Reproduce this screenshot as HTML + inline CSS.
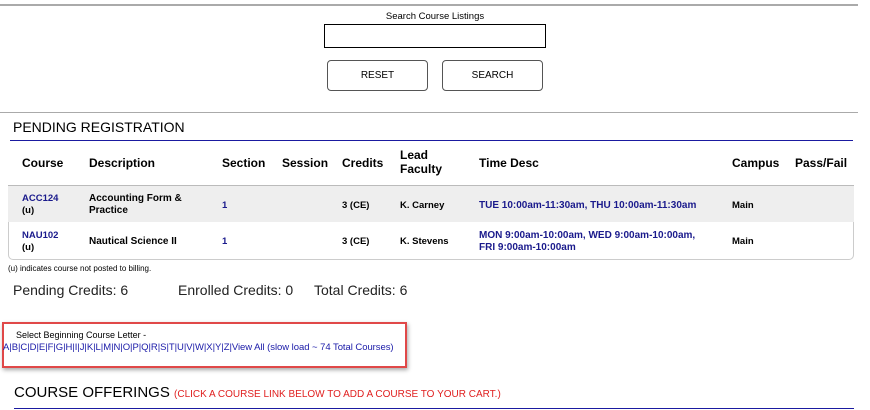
<!DOCTYPE html>
<html><head><style>
body{margin:0;width:870px;height:410px;overflow:hidden;background:#fff;font-family:"Liberation Sans",Arial,sans-serif;position:relative;color:#000}
.a{position:absolute;white-space:nowrap}
.btn{position:absolute;top:60px;width:99px;height:29px;border:1px solid #555;border-radius:4px;font-size:10px;text-align:center;line-height:30px}
.h{font-size:12px;font-weight:bold;top:156px}
.c{font-size:9.5px;font-weight:bold}
.b{color:#1a1a8c}
</style></head><body>
<div class="a" style="left:0;top:4px;width:858px;height:2px;background:#aaa"></div>
<div class="a" style="left:0;width:870px;top:11px;text-align:center;font-size:9.5px">Search Course Listings</div>
<div class="a" style="left:324px;top:24px;width:220px;height:22px;border:1px solid #000"></div>
<div class="btn" style="left:327px">RESET</div>
<div class="btn" style="left:442px">SEARCH</div>
<div class="a" style="left:0;top:112px;width:858px;height:1px;background:#aaa"></div>
<div class="a" style="left:13px;top:119px;font-size:14px">PENDING REGISTRATION</div>
<div class="a" style="left:10px;top:140px;width:843px;height:1px;background:#1a1aa0"></div>
<div class="a h" style="left:22px">Course</div>
<div class="a h" style="left:89px">Description</div>
<div class="a h" style="left:222px">Section</div>
<div class="a h" style="left:282px">Session</div>
<div class="a h" style="left:342px">Credits</div>
<div class="a h" style="left:400px;top:148px;line-height:14px">Lead<br>Faculty</div>
<div class="a h" style="left:479px">Time Desc</div>
<div class="a h" style="left:732px">Campus</div>
<div class="a h" style="left:795px">Pass/Fail</div>
<div class="a" style="left:8px;top:185px;width:846px;height:1px;background:#bbb"></div>
<div class="a" style="left:8px;top:186px;width:846px;height:36px;background:#eee"></div>
<div class="a" style="left:8px;top:222px;width:844px;height:37px;border:1px solid #ccc;border-top:none;border-radius:0 0 5px 5px"></div>
<div class="a c b" style="left:22px;top:193px;line-height:12px">ACC124<br><span style="color:#000">(u)</span></div>
<div class="a c" style="left:89px;top:193px;line-height:12px;font-size:10px">Accounting Form &amp;<br>Practice</div>
<div class="a c b" style="left:222px;top:200px">1</div>
<div class="a c" style="left:342px;top:200px">3 (CE)</div>
<div class="a c" style="left:400px;top:200px">K. Carney</div>
<div class="a c b" style="left:479px;top:200px;font-size:10px">TUE 10:00am-11:30am, THU 10:00am-11:30am</div>
<div class="a c" style="left:732px;top:200px">Main</div>
<div class="a c b" style="left:22px;top:230px;line-height:12px">NAU102<br><span style="color:#000">(u)</span></div>
<div class="a c" style="left:89px;top:236px;font-size:10px">Nautical Science II</div>
<div class="a c b" style="left:222px;top:236px">1</div>
<div class="a c" style="left:342px;top:236px">3 (CE)</div>
<div class="a c" style="left:400px;top:236px">K. Stevens</div>
<div class="a c b" style="left:479px;top:230px;line-height:12px;font-size:10px">MON 9:00am-10:00am, WED 9:00am-10:00am,<br>FRI 9:00am-10:00am</div>
<div class="a c" style="left:732px;top:236px">Main</div>
<div class="a" style="left:8px;top:264px;font-size:8px">(u) indicates course not posted to billing.</div>
<div class="a" style="left:13px;top:282px;font-size:14px;color:#222">Pending Credits: 6</div>
<div class="a" style="left:178px;top:282px;font-size:14px;color:#222">Enrolled Credits: 0</div>
<div class="a" style="left:314px;top:282px;font-size:14px;color:#222">Total Credits: 6</div>
<div class="a" style="left:2px;top:322px;width:401px;height:42px;border:2px solid #e04848;box-shadow:1px 2px 4px rgba(0,0,0,.35)"></div>
<div class="a" style="left:16px;top:330px;font-size:9px">Select Beginning Course Letter -</div>
<div class="a" style="left:3px;top:342px;font-size:9.5px;letter-spacing:-0.05px;color:#1a1aa8">A|B|C|D|E|F|G|H|I|J|K|L|M|N|O|P|Q|R|S|T|U|V|W|X|Y|Z|View All (slow load ~ 74 Total Courses)</div>
<div class="a" style="left:14px;top:384px;font-size:15px">COURSE OFFERINGS <span style="font-size:10px;color:#e02020">(CLICK A COURSE LINK BELOW TO ADD A COURSE TO YOUR CART.)</span></div>
<div class="a" style="left:14px;top:408px;width:840px;height:1px;background:#1a1aa0"></div>
</body></html>
